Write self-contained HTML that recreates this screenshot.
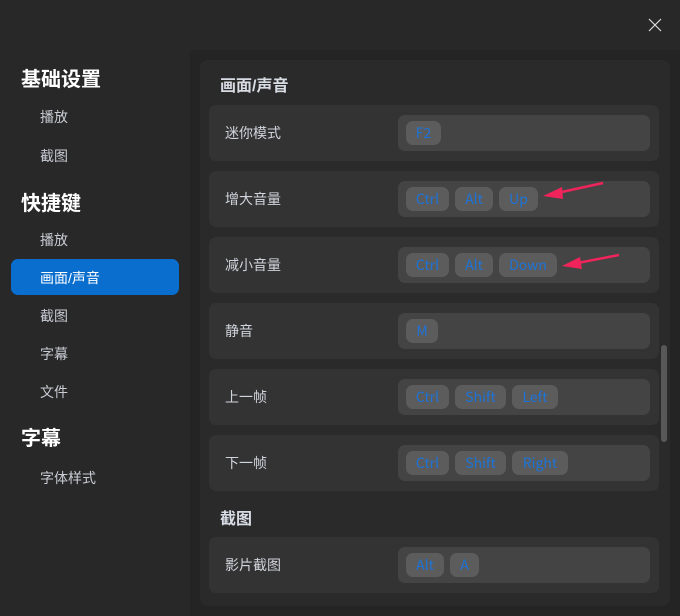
<!DOCTYPE html>
<html><head><meta charset="utf-8"><style>
*{margin:0;padding:0;box-sizing:border-box}
body{width:680px;height:616px;background:#282828;font-family:"Liberation Sans","Noto Sans CJK SC",sans-serif;position:relative;overflow:hidden;color:#d8d8d8}
.abs{position:absolute}
.h{font-size:20px;font-weight:bold;color:#fff;left:21px}
.it{font-size:14px;color:#c8ccd4;left:40px}
.sel{left:11px;top:259px;width:168px;height:36px;background:#0a6ecf;border-radius:7px}
.main{left:190px;top:50px;width:490px;height:566px;background:#242424}
.panel{left:200px;top:60px;width:470px;height:546px;background:#2a2a2a;border-radius:8px}
.row{left:209px;width:450px;height:56px;background:#333;border-radius:7px}
.row .l{position:absolute;left:16px;top:18px;font-size:14px;color:#d0d4dc}
.box{position:absolute;left:189px;top:10px;width:252px;height:36px;background:#444;border-radius:7px;padding:6px 8px;display:flex;gap:6px}
.k{height:24px;background:#5c5c5c;border-radius:7px;color:#1d74d8;font-size:14px;line-height:24px;text-align:center;font-family:"Noto Sans CJK SC","Liberation Sans",sans-serif}
.sh{font-size:16px;font-weight:bold;color:#d8dce4;left:220px}
</style></head><body>
<svg class="abs" style="left:648px;top:18px" width="14" height="14"><path d="M1 1L13 13M13 1L1 13" stroke="#ddd" stroke-width="1.2"/></svg>
<div class="abs h" style="top:63px">基础设置</div>
<div class="abs it" style="top:107px">播放</div>
<div class="abs it" style="top:146px">截图</div>
<div class="abs h" style="top:187px">快捷键</div>
<div class="abs it" style="top:230px">播放</div>
<div class="abs sel"></div>
<div class="abs it" style="top:268px;color:#fff">画面/声音</div>
<div class="abs it" style="top:306px">截图</div>
<div class="abs it" style="top:344px">字幕</div>
<div class="abs it" style="top:382px">文件</div>
<div class="abs h" style="top:422px">字幕</div>
<div class="abs it" style="top:468px">字体样式</div>
<div class="abs main"></div>
<div class="abs panel"></div>
<div class="abs sh" style="top:72px">画面/声音</div>
<div class="abs row" style="top:105px"><div class="l">迷你模式</div><div class="box"><span class="k" style="width:35px">F2</span></div></div>
<div class="abs row" style="top:171px"><div class="l">增大音量</div><div class="box"><span class="k" style="width:43px">Ctrl</span><span class="k" style="width:38px">Alt</span><span class="k" style="width:39px">Up</span></div></div>
<div class="abs row" style="top:237px"><div class="l">减小音量</div><div class="box"><span class="k" style="width:43px">Ctrl</span><span class="k" style="width:38px">Alt</span><span class="k" style="width:58px">Down</span></div></div>
<div class="abs row" style="top:303px"><div class="l">静音</div><div class="box"><span class="k" style="width:32px">M</span></div></div>
<div class="abs row" style="top:369px"><div class="l">上一帧</div><div class="box"><span class="k" style="width:43px">Ctrl</span><span class="k" style="width:51px">Shift</span><span class="k" style="width:46px">Left</span></div></div>
<div class="abs row" style="top:435px"><div class="l">下一帧</div><div class="box"><span class="k" style="width:43px">Ctrl</span><span class="k" style="width:51px">Shift</span><span class="k" style="width:56px">Right</span></div></div>
<div class="abs sh" style="top:505px">截图</div>
<div class="abs row" style="top:537px"><div class="l">影片截图</div><div class="box"><span class="k" style="width:38px">Alt</span><span class="k" style="width:29px">A</span></div></div>
<div class="abs" style="left:661px;top:345px;width:6px;height:97px;background:#585858;border-radius:3px"></div>
<svg class="abs" style="left:0;top:0" width="680" height="616">
<path d="M603 183L548 195" stroke="#f0245a" stroke-width="2.5"/><path d="M543 196L562 187L563 199Z" fill="#f0245a"/>
<path d="M619 255L567 265" stroke="#f0245a" stroke-width="2.5"/><path d="M562 266L580 257L582 269Z" fill="#f0245a"/>
</svg>
</body></html>
